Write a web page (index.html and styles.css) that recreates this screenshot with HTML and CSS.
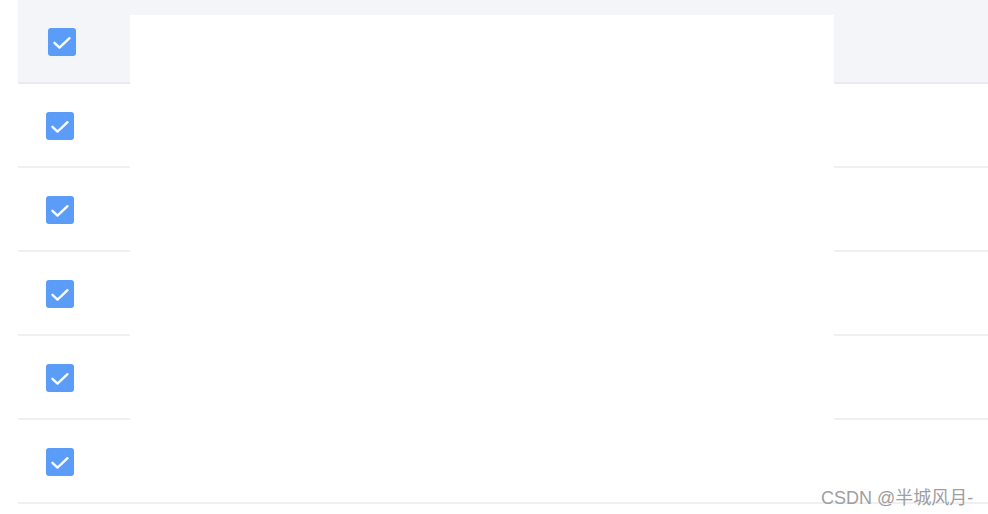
FILE: index.html
```html
<!DOCTYPE html>
<html>
<head>
<meta charset="utf-8">
<link rel="stylesheet" href="styles.css">
</head>
<body>
<div class="table">
  <div class="row head"><span class="cb"><svg viewBox="0 0 28 28" width="28" height="28"><path d="M6.5 14.8 L11.5 19.6 L21.5 10.2" fill="none" stroke="#fff" stroke-width="2.4" stroke-linecap="round" stroke-linejoin="round"/></svg></span></div>
  <div class="row"><span class="cb"><svg viewBox="0 0 28 28" width="28" height="28"><path d="M6.5 14.8 L11.5 19.6 L21.5 10.2" fill="none" stroke="#fff" stroke-width="2.4" stroke-linecap="round" stroke-linejoin="round"/></svg></span></div>
  <div class="row"><span class="cb"><svg viewBox="0 0 28 28" width="28" height="28"><path d="M6.5 14.8 L11.5 19.6 L21.5 10.2" fill="none" stroke="#fff" stroke-width="2.4" stroke-linecap="round" stroke-linejoin="round"/></svg></span></div>
  <div class="row"><span class="cb"><svg viewBox="0 0 28 28" width="28" height="28"><path d="M6.5 14.8 L11.5 19.6 L21.5 10.2" fill="none" stroke="#fff" stroke-width="2.4" stroke-linecap="round" stroke-linejoin="round"/></svg></span></div>
  <div class="row"><span class="cb"><svg viewBox="0 0 28 28" width="28" height="28"><path d="M6.5 14.8 L11.5 19.6 L21.5 10.2" fill="none" stroke="#fff" stroke-width="2.4" stroke-linecap="round" stroke-linejoin="round"/></svg></span></div>
  <div class="row"><span class="cb"><svg viewBox="0 0 28 28" width="28" height="28"><path d="M6.5 14.8 L11.5 19.6 L21.5 10.2" fill="none" stroke="#fff" stroke-width="2.4" stroke-linecap="round" stroke-linejoin="round"/></svg></span></div>
  <div class="cover"></div>
</div>
<div class="watermark">CSDN @半城风月-</div>
</body>
</html>
```
FILE: styles.css
```css
html, body {
  margin: 0;
  padding: 0;
  background: #fff;
  width: 988px;
  height: 514px;
  overflow: hidden;
  font-family: "Liberation Sans", "Noto Sans CJK SC", sans-serif;
}
.table {
  position: relative;
  margin-left: 18px;
  width: 970px;
}
.row {
  box-sizing: border-box;
  height: 84px;
  padding-top: 2px;
  border-bottom: 2px solid #eef0f4;
  display: flex;
  align-items: center;
  padding-left: 28px;
}
.row.head {
  background: #f4f5f9;
  border-bottom: 2px solid #e8eaf0;
  padding-left: 30px;
}
.cb {
  width: 28px;
  height: 28px;
  border-radius: 3px;
  background: #5a9cf8;
  display: flex;
}
.cover {
  position: absolute;
  left: 112px;
  top: 15px;
  width: 704px;
  height: 470px;
  background: #fff;
}
.watermark {
  position: absolute;
  left: 821px;
  top: 483px;
  font-size: 18px;
  color: #9e9e9e;
  white-space: nowrap;
}
```
